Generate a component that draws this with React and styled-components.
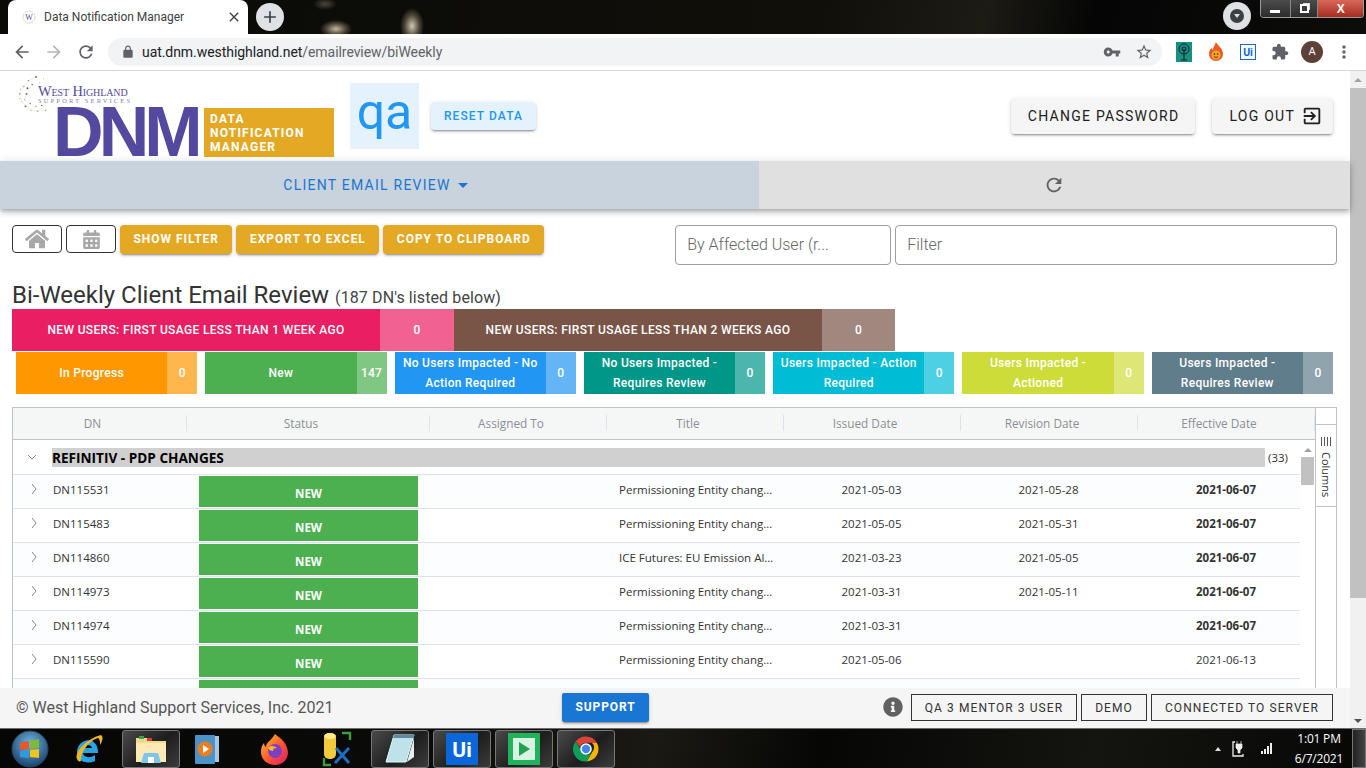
import React from 'react';
import styled, {createGlobalStyle} from 'styled-components';
import {FaHome, FaCalendarAlt, FaInfoCircle} from 'react-icons/fa';

const paths = {
  back: "M20 11H7.83l5.59-5.59L12 4l-8 8 8 8 1.41-1.41L7.83 13H20v-2z",
  forward: "M12 4l-1.41 1.41L16.17 11H4v2h12.17l-5.58 5.59L12 20l8-8z",
  reload: "M17.65 6.35C16.2 4.9 14.21 4 12 4c-4.42 0-7.99 3.58-7.99 8s3.57 8 7.99 8c3.73 0 6.84-2.55 7.73-6h-2.08c-.82 2.33-3.04 4-5.65 4-3.31 0-6-2.69-6-6s2.69-6 6-6c1.66 0 3.14.69 4.22 1.78L13 11h7V4l-2.35 2.35z",
  lock: "M18 8h-1V6c0-2.76-2.24-5-5-5S7 3.24 7 6v2H6c-1.1 0-2 .9-2 2v10c0 1.1.9 2 2 2h12c1.1 0 2-.9 2-2V10c0-1.1-.9-2-2-2zM9 6c0-1.66 1.34-3 3-3s3 1.34 3 3v2H9V6z",
  key: "M12.65 10C11.83 7.67 9.61 6 7 6c-3.31 0-6 2.69-6 6s2.69 6 6 6c2.61 0 4.83-1.67 5.65-4H17v4h4v-4h2v-4H12.65zM7 14c-1.1 0-2-.9-2-2s.9-2 2-2 2 .9 2 2-.9 2-2 2z",
  star: "M22 9.24l-7.19-.62L12 2 9.19 8.63 2 9.24l5.46 4.73L5.82 21 12 17.27 18.18 21l-1.63-7.03L22 9.24zM12 15.4l-3.76 2.27 1-4.28-3.32-2.88 4.38-.38L12 6.1l1.71 4.04 4.38.38-3.32 2.88 1 4.28L12 15.4z",
  puzzle: "M20.5 11H19V7c0-1.1-.9-2-2-2h-4V3.5C13 2.12 11.88 1 10.5 1S8 2.12 8 3.5V5H4c-1.1 0-1.99.9-1.99 2v3.8H3.5c1.49 0 2.7 1.21 2.7 2.7s-1.21 2.7-2.7 2.7H2V20c0 1.1.9 2 2 2h3.8v-1.5c0-1.49 1.21-2.7 2.7-2.7 1.49 0 2.7 1.21 2.7 2.7V22H17c1.1 0 2-.9 2-2v-4h1.5c1.38 0 2.5-1.12 2.5-2.5S21.88 11 20.5 11z",
  exit: "M10.09 15.59L11.5 17l5-5-5-5-1.41 1.41L12.67 11H3v2h9.67l-2.58 2.59zM19 3H5c-1.11 0-2 .9-2 2v4h2V5h14v14H5v-4H3v4c0 1.1.89 2 2 2h14c1.1 0 2-.9 2-2V5c0-1.1-.9-2-2-2z",
  dots: "M12 8c1.1 0 2-.9 2-2s-.9-2-2-2-2 .9-2 2 .9 2 2 2zm0 2c-1.1 0-2 .9-2 2s.9 2 2 2 2-.9 2-2-.9-2-2-2zm0 6c-1.1 0-2 .9-2 2s.9 2 2 2 2-.9 2-2-.9-2-2-2z",
  close: "M19 6.41L17.59 5 12 10.59 6.41 5 5 6.41 10.59 12 5 17.59 6.41 19 12 13.41 17.59 19 19 17.59 13.41 12z",
  plus: "M19 13h-6v6h-2v-6H5v-2h6V5h2v6h6v2z",
};

const Mi = ({name, size = 24, color = '#5f6368'}) => (
  <svg width={size} height={size} viewBox="0 0 24 24" fill={color} style={{display: 'block', flex: 'none'}}>
    <path d={paths[name]} />
  </svg>
);

const GlobalStyle = createGlobalStyle`
  html, body { margin: 0; padding: 0; height: 100%; overflow: hidden; background: #fff; }
  * { box-sizing: border-box; }
  body { font-family: Roboto, "Liberation Sans", sans-serif; }
`;

const Screen = styled.div`
  width: 100vw;
  height: 100vh;
  display: flex;
  flex-direction: column;
  overflow: hidden;
`;

/* browser chrome */
const TabStrip = styled.div`
  height: 34px;
  flex: none;
  display: flex;
  align-items: flex-end;
  background:
    radial-gradient(ellipse 16px 9px at 336px 29px, #c2b9a2 0%, rgba(120,110,90,.6) 60%, transparent 100%),
    radial-gradient(ellipse 12px 18px at 412px 26px, #cfc7b0 0%, rgba(120,110,90,.6) 60%, transparent 100%),
    radial-gradient(ellipse 12px 6px at 325px 4px, #4a473c 0%, transparent 100%),
    linear-gradient(100deg, #0a0a06 0%, #100f0a 60%, #1c1b14 72%, #050505 80%, #0c0c0a 100%);
`;
const Tab = styled.div`
  width: 240px;
  height: 34px;
  margin-left: 8px;
  background: #fff;
  border-radius: 8px 8px 0 0;
  display: flex;
  align-items: center;
  padding: 0 6px 0 13px;
  font: 12px Roboto, sans-serif;
  color: #3c4043;
`;
const TabTitle = styled.span`
  margin-left: 7px;
  flex: 1;
`;
const NewTab = styled.div`
  width: 28px;
  height: 28px;
  margin: 0 0 3px 8px;
  border-radius: 50%;
  background: #dee1e6;
  display: flex;
  align-items: center;
  justify-content: center;
`;
const MediaDot = styled.div`
  width: 28px;
  height: 28px;
  margin: 0 9px 4px auto;
  border-radius: 50%;
  background: #dee1e6;
  display: flex;
  align-items: center;
  justify-content: center;
`;
const MediaInner = styled.div`
  width: 14px;
  height: 14px;
  border-radius: 50%;
  background: #3c4043;
  display: flex;
  align-items: center;
  justify-content: center;
  &::after {
    content: '';
    border-left: 3px solid transparent;
    border-right: 3px solid transparent;
    border-top: 4px solid #dee1e6;
  }
`;
const WindowControls = styled.div`
  align-self: flex-start;
  display: flex;
  width: 104px;
  height: 18px;
  margin-right: 2px;
  border: 1px solid #9a9a9a;
  border-top: none;
  border-radius: 0 0 4px 4px;
  overflow: hidden;
`;
const WinBtn = styled.div`
  flex: ${p => p.$grow || 1};
  background: ${p => p.$bg || 'linear-gradient(#4c4c4c, #2c2c2c)'};
  border-right: 1px solid #888;
  display: flex;
  align-items: center;
  justify-content: center;
  color: #fff;
  font: bold 12px "Liberation Sans", sans-serif;
  &:last-child { border-right: none; }
`;
const MinBar = styled.div`
  width: 10px;
  height: 3px;
  background: #fff;
  margin-top: 5px;
`;
const RestoreBox = styled.div`
  width: 9px;
  height: 9px;
  border: 2px solid #fff;
  box-shadow: 2px -2px 0 -1px #ddd;
`;

const Toolbar = styled.div`
  height: 37px;
  flex: none;
  display: flex;
  align-items: center;
  background: #fff;
  border-bottom: 1px solid #d5d7da;
  padding-bottom: 1px;
`;
const NavIcon = styled.div`
  width: 32px;
  display: flex;
  justify-content: center;
  &:first-child { margin-left: 6px; }
`;
const UrlBar = styled.div`
  width: 1054px;
  height: 28px;
  margin-left: 6px;
  border-radius: 14px;
  background: #f1f3f4;
  display: flex;
  align-items: center;
  padding: 0 2px 0 13px;
  font: 14px Roboto, sans-serif;
  color: #5f6368;
`;
const UrlText = styled.span`
  flex: 1;
  margin-left: 7px;
  letter-spacing: -.06px;
  b { font-weight: 400; color: #202124; }
`;
const UrlIcon = styled.div`
  width: 32px;
  display: flex;
  justify-content: center;
`;
const Extensions = styled.div`
  display: flex;
  align-items: center;
  margin-left: 6px;
`;
const ExtSlot = styled.div`
  width: 32px;
  display: flex;
  justify-content: center;
  align-items: center;
`;
const Avatar = styled.div`
  width: 22px;
  height: 22px;
  border-radius: 50%;
  background: #5d4037;
  color: #fff;
  font: 11px Roboto, sans-serif;
  display: flex;
  align-items: center;
  justify-content: center;
`;

/* page */
const Viewport = styled.div`
  flex: 1;
  min-height: 0;
  display: flex;
`;
const Page = styled.div`
  flex: 1;
  min-width: 0;
  display: flex;
  flex-direction: column;
`;
const PageScroll = styled.div`
  width: 16px;
  flex: none;
  background: #f1f1f1;
  display: flex;
  flex-direction: column;
  align-items: center;
  padding-top: 7px;
`;
const ArrowUp = styled.div`
  border-left: 4px solid transparent;
  border-right: 4px solid transparent;
  border-bottom: 4px solid ${p => p.$color || '#a3a3a3'};
`;
const ArrowDown = styled.div`
  margin-top: auto;
  margin-bottom: 5px;
  border-left: 4px solid transparent;
  border-right: 4px solid transparent;
  border-top: 4px solid #505050;
`;
const PageThumb = styled.div`
  width: 100%;
  height: 510px;
  margin-top: 6px;
  background: #c1c1c1;
`;

const Header = styled.header`
  height: 90px;
  flex: none;
  position: relative;
  display: flex;
  align-items: flex-start;
  background: #fff;
`;
const Logo = styled.div`
  width: 334px;
  padding: 14px 0 0 38px;
  position: relative;
  flex: none;
`;
const Globe = styled.svg`
  position: absolute;
  left: 17px;
  top: 4px;
`;
const LogoName = styled.div`
  font: 14.4px "Liberation Serif", serif;
  font-variant: small-caps;
  color: #574a9c;
  line-height: 12px;
  letter-spacing: -.1px;
  span { display: block; font: 6.5px "Liberation Serif", serif; letter-spacing: 2.15px; color: #8580b0; line-height: 8px; }
`;
const LogoMark = styled.div`
  display: flex;
  margin: 3px 0 0 19px;
  height: 49px;
`;
const Dnm = styled.div`
  width: 146px;
  margin-left: -4px;
  font: bold 70px/49px "Liberation Sans", sans-serif;
  letter-spacing: -4.9px;
  color: #534aa0;
  height: 49px;
`;
const LogoBadge = styled.div`
  width: 130px;
  margin-left: 5px;
  background: #e4a924;
  color: #fff;
  font: 700 12px/14.2px Roboto, sans-serif;
  letter-spacing: 1.2px;
  padding: 4px 0 0 6px;
`;
const EnvBadge = styled.div`
  width: 69px;
  height: 66px;
  margin: 12px 0 0 16px;
  background: #e3f2fd;
  color: #2196f3;
  font: 400 50px/58px Roboto, sans-serif;
  text-align: center;
`;
const raised = `box-shadow: 0 3px 1px -2px rgba(0,0,0,.2), 0 2px 2px 0 rgba(0,0,0,.14), 0 1px 5px 0 rgba(0,0,0,.12);`;
const ResetButton = styled.div`
  width: 105px;
  height: 28px;
  margin: 31px 0 0 12px;
  border-radius: 4px;
  background: #e3f2fd;
  color: #2196f3;
  font: 500 12px/28px Roboto, sans-serif;
  letter-spacing: 1.1px;
  text-align: center;
  ${raised}
`;
const AccountGroup = styled.div`
  margin: 27px 17px 0 auto;
  display: flex;
  gap: 17px;
`;
const AccountButton = styled.div`
  height: 36px;
  padding: 0 ${p => p.$right || 16}px 0 17px;
  border-radius: 4px;
  background: #f5f5f5;
  color: #212121;
  font: 400 14px Roboto, sans-serif;
  letter-spacing: 1.25px;
  display: flex;
  align-items: center;
  gap: 6px;
  ${raised}
`;

const NavBar = styled.nav`
  height: 48px;
  flex: none;
  display: flex;
  position: relative;
  box-shadow: 0 2px 4px -1px rgba(0,0,0,.2), 0 4px 5px 0 rgba(0,0,0,.14), 0 1px 10px 0 rgba(0,0,0,.12);
`;
const NavTab = styled.div`
  width: 759px;
  background: #c8d3de;
  display: flex;
  align-items: center;
  justify-content: center;
  padding-right: 8px;
  color: #1976d2;
  font: 400 14px Roboto, sans-serif;
  letter-spacing: 1.25px;
  gap: 7px;
  &::after {
    content: '';
    border-left: 5px solid transparent;
    border-right: 5px solid transparent;
    border-top: 5px solid #1976d2;
  }
`;
const NavRefresh = styled.div`
  flex: 1;
  background: #e0e0e0;
  display: flex;
  align-items: center;
  justify-content: center;
  padding-right: 1px;
`;

const ActionRow = styled.div`
  height: 40px;
  flex: none;
  margin: 16px 13px 0 12px;
  display: flex;
  align-items: flex-start;
  gap: 4px;
`;
const IconButton = styled.div`
  width: 50px;
  height: 28px;
  border: 1px solid #333;
  border-radius: 4px;
  color: #a8a8a8;
  display: flex;
  align-items: center;
  justify-content: center;
`;
const GoldButton = styled.div`
  height: 29px;
  padding: 0 13.5px;
  border-radius: 4px;
  background: #e4a924;
  color: #fff;
  font: 700 12px/28px Roboto, sans-serif;
  letter-spacing: .97px;
  white-space: nowrap;
  ${raised}
`;
const Field = styled.div`
  width: ${p => p.$width ? p.$width + 'px' : 'auto'};
  flex: ${p => p.$width ? 'none' : 1};
  margin-left: ${p => p.$offset || 0}px;
  height: 40px;
  border: 1px solid #9e9e9e;
  border-radius: 4px;
  padding: 0 11px;
  font: 300 16px/38px Roboto, sans-serif;
  color: #666;
  white-space: nowrap;
`;

const TitleLine = styled.div`
  flex: none;
  height: 28px;
  margin: 15px 0 0 12px;
  font: 400 24px/30px Roboto, sans-serif;
  color: #333;
  white-space: nowrap;
  small { font-size: 16px; color: #444; letter-spacing: .1px; }
`;

const BannerRow = styled.div`
  flex: none;
  display: flex;
  height: 42px;
  margin: 1px 0 0 12px;
`;
const BannerLabel = styled.div`
  width: 368px;
  background: ${p => p.$bg};
  color: #fff;
  font: 500 12px Roboto, sans-serif;
  letter-spacing: .35px;
  display: flex;
  align-items: center;
  justify-content: center;
`;
const BannerCount = styled.div`
  width: ${p => p.$w}px;
  background: ${p => p.$bg};
  color: #fff;
  font: 500 12px Roboto, sans-serif;
  display: flex;
  align-items: center;
  justify-content: center;
`;

const TileRow = styled.div`
  flex: none;
  height: 42px;
  margin: 1px 17px 0 16px;
  display: grid;
  grid-template-columns: repeat(7, 1fr);
  column-gap: 8px;
`;
const Tile = styled.div`
  display: flex;
  background: ${p => p.$bg};
  color: #fff;
  font: 500 12px/20px Roboto, sans-serif;
  letter-spacing: .3px;
  text-align: center;
`;
const TileLabel = styled.div`
  flex: 1;
  padding: 0 6px;
  display: flex;
  align-items: center;
  justify-content: center;
`;
const TileCount = styled.div`
  width: 30px;
  flex: none;
  background: ${p => p.$bg};
  display: flex;
  align-items: center;
  justify-content: center;
`;

/* grid */
const Grid = styled.div`
  flex: 1;
  min-height: 0;
  margin: 13px 13px 0 12px;
  border: 1px solid #bdc3c7;
  border-bottom: none;
  display: flex;
  overflow: hidden;
  font-family: "Open Sans", "Liberation Sans", sans-serif;
`;
const GridMain = styled.div`
  flex: 1;
  min-width: 0;
  display: flex;
  flex-direction: column;
`;
const HeadRow = styled.div`
  height: 32px;
  flex: none;
  display: grid;
  grid-template-columns: 174px 243px 177px 177px 177px 177px 1fr;
  align-items: center;
  padding-bottom: 2px;
  background: #f5f7f7;
  border-bottom: 1px solid #bdc3c7;
`;
const HeadCell = styled.div`
  height: 16px;
  border-right: 1px solid #dde2eb;
  padding-right: 14px;
  text-align: center;
  font-size: 11.8px;
  line-height: 16px;
  color: #8a8f94;
`;
const GridBody = styled.div`
  flex: 1;
  min-height: 0;
  display: flex;
`;
const RowsPane = styled.div`
  flex: 1;
  min-width: 0;
  overflow: hidden;
`;
const GroupRow = styled.div`
  height: 35px;
  display: flex;
  align-items: center;
  border-bottom: 1px solid #dde2eb;
  padding: 0 12px 0 14px;
  font-size: 11.5px;
  color: #333;
`;
const Chevron = styled.svg`
  flex: none;
  display: block;
`;
const GroupBar = styled.div`
  flex: 1;
  height: 19px;
  margin-left: 15px;
  background: #d0d0d0;
  color: #000;
  font-weight: 700;
  font-size: 13.6px;
  line-height: 19px;
`;
const GroupCount = styled.div`
  margin-left: 2px;
  width: 21px;
  text-align: right;
`;
const Row = styled.div`
  height: 34px;
  width: 1302px;
  display: grid;
  grid-template-columns: 173px 243px 177px 177px 177px 177px 178px;
  background: ${p => p.$odd ? '#fcfdfe' : '#fff'};
  border-bottom: 1px solid #dde2eb;
  font-size: 11.5px;
  color: #333;
`;
const DnCell = styled.div`
  display: flex;
  align-items: center;
  height: 28px;
  padding-left: 16px;
  gap: 14px;
`;
const StatusCell = styled.div`
  height: 31px;
  margin: 1px 11px 0 13px;
  background: ${p => p.$bg || 'transparent'};
  color: #fff;
  font-weight: 700;
  font-size: 11.5px;
  line-height: 35px;
  text-align: center;
`;
const TextCell = styled.div`
  padding: 0 9px 0 13px;
  line-height: 30px;
  white-space: nowrap;
  overflow: hidden;
  text-overflow: ellipsis;
`;
const DateCell = styled.div`
  line-height: 30px;
  text-align: center;
  font-weight: ${p => p.$bold ? 700 : 400};
`;
const BodyScroll = styled.div`
  width: 15px;
  flex: none;
  display: flex;
  flex-direction: column;
  align-items: center;
  padding-top: 8px;
  background: #fff;
`;
const BodyThumb = styled.div`
  width: 13px;
  height: 28px;
  margin-top: 5px;
  background: #c1c1c1;
`;
const SidePanel = styled.div`
  width: 21px;
  flex: none;
  border-left: 1px solid #bdc3c7;
  padding-top: 16px;
`;
const ColumnsTab = styled.div`
  height: 83px;
  border-top: 1px solid #bdc3c7;
  border-bottom: 1px solid #bdc3c7;
  display: flex;
  flex-direction: column;
  align-items: center;
  padding-top: 12px;
  gap: 6px;
  font-size: 11px;
  color: #333;
`;
const ColumnsGlyph = styled.div`
  width: 10px;
  height: 9px;
  background: repeating-linear-gradient(90deg, #555 0 1px, transparent 1px 3px);
`;
const ColumnsLabel = styled.span`
  writing-mode: vertical-rl;
`;

const Footer = styled.footer`
  height: 40px;
  flex: none;
  background: #f5f5f5;
  display: flex;
  align-items: center;
  padding: 0 17px 2px 16px;
  position: relative;
  z-index: 2;
`;
const Copyright = styled.div`
  width: 546px;
  font: 400 16px Roboto, sans-serif;
  color: #555;
`;
const SupportButton = styled.div`
  width: 87px;
  height: 29px;
  border-radius: 2px;
  background: #1976d2;
  color: #fff;
  font: 700 12px/28px Roboto, sans-serif;
  letter-spacing: .9px;
  text-align: center;
  ${raised}
`;
const FooterRight = styled.div`
  margin-left: auto;
  display: flex;
  align-items: center;
  gap: 4px;
`;
const InfoWrap = styled.div`
  margin-right: 4px;
  color: #616161;
  display: flex;
`;
const OutlineTag = styled.div`
  height: 27px;
  padding: 0 13px;
  border: 1px solid #333;
  color: #333;
  font: 400 12px/26px Roboto, sans-serif;
  letter-spacing: 1.08px;
`;

/* taskbar */
const Taskbar = styled.div`
  height: 40px;
  flex: none;
  display: flex;
  align-items: center;
  border-top: 1px solid #6d6d6d;
  background: linear-gradient(100deg, #060604 0%, #0a0a08 30%, #1a1913 48%, #060605 60%, #141410 80%, #070706 100%);
  color: #fff;
  padding-left: 7px;
`;
const Slot = styled.div`
  width: ${p => p.$w || 58}px;
  height: 38px;
  margin-right: ${p => p.$gap ?? 4}px;
  display: flex;
  align-items: center;
  justify-content: center;
  flex: none;
  border-radius: 3px;
  border: 1px solid ${p => p.$active ? '#777' : 'transparent'};
  background: ${p => p.$active ? 'linear-gradient(135deg, #4a4a4a, #1d1d1d 55%, #3c3c3c)' : 'transparent'};
`;
const Tray = styled.div`
  margin-left: auto;
  display: flex;
  align-items: center;
`;
const TrayArrow = styled.div`
  border-left: 3px solid transparent;
  border-right: 3px solid transparent;
  border-bottom: 4px solid #ddd;
  margin-right: 11px;
`;
const Signal = styled.div`
  display: flex;
  align-items: flex-end;
  gap: 1px;
  height: 11px;
  margin-left: 15px;
`;
const SignalBar = styled.div`
  width: 2px;
  height: ${p => p.$h}px;
  background: #eee;
`;
const Clock = styled.div`
  width: 62px;
  margin-left: 16px;
  text-align: center;
  font: 12px/20px "Open Sans", sans-serif;
  letter-spacing: -.2px;
`;
const ShowDesktop = styled.div`
  width: 14px;
  height: 39px;
  margin-left: 2px;
  border: 1px solid #777;
  background: linear-gradient(90deg, #222, #444);
`;

const Orb = () => (
  <svg width="38" height="38" viewBox="0 0 38 38">
    <defs>
      <radialGradient id="orb" cx=".5" cy=".35" r=".7"><stop offset="0" stopColor="#6fb6de" /><stop offset="1" stopColor="#123a66" /></radialGradient>
    </defs>
    <circle cx="19" cy="19" r="18" fill="url(#orb)" stroke="#2a4560" />
    <path d="M9 13l9-2v8l-9 1z" fill="#e8562a" />
    <path d="M19 11l9-2v9l-9 1z" fill="#7ebb3c" />
    <path d="M9 21l9-1v8l-9-1z" fill="#2e9be0" />
    <path d="M19 20l9-1v9l-9-1z" fill="#f3c21e" />
  </svg>
);
const IeIcon = () => (
  <svg width="34" height="34" viewBox="0 0 34 34">
    <path d="M26 21h-15c.5 4 6 6 12 2v6c-9 4-18 0-18-9 0-8 8-14 15-11 4 2 6 6 6 12zm-6-5c-.5-4-8-4-9 0z" fill="#2aa3e6" />
    <path d="M5 27C2 20 16 6 29 3c3 2 1 7-1 10 0-3 0-6-2-7C18 8 8 20 9 29c-2 1-3 0-4-2z" fill="#f0b71e" />
  </svg>
);
const FolderIcon = () => (
  <svg width="34" height="32" viewBox="0 0 34 32">
    <path d="M2 5h11l2 3h17v21H2z" fill="#f2d98b" />
    <path d="M2 10h30v19H2z" fill="#fbeab5" />
    <rect x="5" y="3" width="5" height="3" fill="#3aa04a" /><rect x="13" y="5" width="5" height="3" fill="#d8402e" />
    <path d="M10 20h14l3 10H7z" fill="#7fc4ea" />
    <rect x="14" y="24" width="6" height="6" fill="#fff" />
  </svg>
);
const MediaIcon = () => (
  <svg width="28" height="32" viewBox="0 0 28 32">
    <rect x="8" y="3" width="18" height="26" fill="#a9c7de" />
    <rect x="2" y="2" width="20" height="29" rx="1" fill="#4c93c6" />
    <circle cx="12" cy="16" r="7.5" fill="#ee7d1f" />
    <path d="M10 12l6 4-6 4z" fill="#fff" />
  </svg>
);
const FoxIcon = () => (
  <svg width="32" height="36" viewBox="0 0 32 36">
    <defs>
      <linearGradient id="fox" x1="0" y1="0" x2="1" y2="1"><stop offset="0" stopColor="#ffca2c" /><stop offset=".5" stopColor="#ff5b2d" /><stop offset="1" stopColor="#e3176b" /></linearGradient>
    </defs>
    <path d="M16 3c3 3 12 7 13 18 0 8-6 13-13 13S2 29 2 21c0-4 1-7 3-9 0 2 1 3 2 4 0-5 6-7 9-13z" fill="url(#fox)" />
    <circle cx="16" cy="20" r="7" fill="#7b3fc4" />
    <path d="M9 17c3-3 7-2 9 0-3 0-4 1-4 3-2 0-4-1-5-3z" fill="#ffb52c" />
  </svg>
);
const DbIcon = () => (
  <svg width="34" height="36" viewBox="0 0 34 36">
    <rect x="3" y="2" width="12" height="26" rx="5" fill="#f2cb3c" />
    <ellipse cx="9" cy="5" rx="6" ry="3" fill="#ffe88a" />
    <path d="M21 2h8v7M3 27v7h7" fill="none" stroke="#3f9b3f" strokeWidth="2.4" />
    <path d="M14 32l14-15M28 32L15 17" stroke="#1a6fc4" strokeWidth="3" />
  </svg>
);
const NoteIcon = () => (
  <svg width="34" height="34" viewBox="0 0 34 34">
    <path d="M11 3h20l-8 27H3z" fill="#bfe2ea" stroke="#dff" />
    <path d="M11 3h20v3H10z" fill="#5d8aa0" />
    <path d="M24 30l7-24v19z" fill="#e5edef" />
  </svg>
);
const UiIcon = ({size = 32, outline}) => (
  <svg width={size} height={size} viewBox="0 0 32 32">
    <rect width="32" height="32" fill={outline ? '#fff' : '#0a66d9'} stroke="#0a66d9" strokeWidth={outline ? 4 : 0} />
    <text x="16" y="24" textAnchor="middle" fontFamily="Roboto, sans-serif" fontWeight="700" fontSize="21" fill={outline ? '#0a66d9' : '#fff'}>Ui</text>
  </svg>
);
const PlayIcon = () => (
  <svg width="32" height="32" viewBox="0 0 32 32">
    <rect width="32" height="32" fill="#21b35a" />
    <rect x="5" y="5" width="22" height="22" fill="#d9f3e2" />
    <path d="M11 9l11 7-11 7z" fill="#21a152" />
  </svg>
);
const ChromeIcon = () => (
  <svg width="30" height="30" viewBox="0 0 48 48">
    <path d="M24 4a20 20 0 0 1 17.3 10H24a10 10 0 0 0-9.4 6.6L7.7 11.5A20 20 0 0 1 24 4z" fill="#db4437" />
    <path d="M41.3 14A20 20 0 0 1 25 44l8.7-15a10 10 0 0 0-.2-15z" fill="#f4b400" />
    <path d="M25 44A20 20 0 0 1 7.7 11.5l8.6 15A10 10 0 0 0 33.7 29z" fill="#0f9d58" />
    <circle cx="24" cy="24" r="8" fill="#4285f4" stroke="#fff" strokeWidth="2.5" />
  </svg>
);
const GlobeMark = ({size}) => {
  const dots = [[20, 2], [28, 4], [12, 6], [7, 12], [3, 20], [5, 28], [9, 33], [15, 37], [22, 38], [30, 37], [16, 10], [24, 8], [10, 20], [8, 26], [14, 30], [20, 33], [26, 32], [4, 15], [11, 14], [3, 25]];
  return (
    <Globe width={size} height={size} viewBox="0 0 40 40">
      {dots.map(([x, y], i) => <circle key={i} cx={x} cy={y} r={i % 3 === 0 ? 1 : .7} fill={i % 2 ? '#c9b67a' : '#574a7c'} />)}
      <path d="M20 2L12 6 7 12 3 20 5 28 9 33 15 37 22 38M16 10L10 20 8 26 14 30 20 33" fill="none" stroke="#d8cfae" strokeWidth=".4" />
    </Globe>
  );
};
const FireExt = () => (
  <svg width="16" height="20" viewBox="0 0 16 20">
    <path d="M8 0c1 3 7 6 7 12a7 7 0 0 1-14 0c0-3 1-5 3-6 0 1 1 2 1 2 0-3 2-5 3-8z" fill="#ef5a24" />
    <circle cx="8" cy="13" r="4.5" fill="#f7a325" />
    <circle cx="6.4" cy="12" r=".8" fill="#222" /><circle cx="9.6" cy="12" r=".8" fill="#222" />
    <path d="M6 14.5c1 1.2 3 1.2 4 0" fill="none" stroke="#222" strokeWidth=".8" />
  </svg>
);
const TreeExt = () => (
  <svg width="16" height="20" viewBox="0 0 16 20">
    <rect width="16" height="20" fill="#17917f" />
    <circle cx="8" cy="7" r="5" fill="none" stroke="#123" strokeWidth="1" />
    <circle cx="8" cy="7" r="2" fill="none" stroke="#123" strokeWidth="1" />
    <path d="M8 7v11M5 18h6" stroke="#123" strokeWidth="1.2" />
  </svg>
);
const PlugIcon = () => (
  <svg width="14" height="18" viewBox="0 0 14 18">
    <path d="M3 2H1v14h10v-2" fill="none" stroke="#eee" strokeWidth="1.3" />
    <path d="M5 1v3M9 1v3M4 4h6v4l-2 2v3H6v-3L4 8z" fill="#eee" stroke="#eee" strokeWidth=".7" />
  </svg>
);

const tiles = [
  {label: 'In Progress', count: 0, bg: '#ff9800', light: '#ffb74d'},
  {label: 'New', count: 147, bg: '#4caf50', light: '#81c784'},
  {label: 'No Users Impacted - No Action Required', count: 0, bg: '#2196f3', light: '#64b5f6'},
  {label: 'No Users Impacted - Requires Review', count: 0, bg: '#009688', light: '#4db6ac'},
  {label: 'Users Impacted - Action Required', count: 0, bg: '#00bcd4', light: '#4dd0e1'},
  {label: 'Users Impacted - Actioned', count: 0, bg: '#cddc39', light: '#dce775'},
  {label: 'Users Impacted - Requires Review', count: 0, bg: '#607d8b', light: '#90a4ae'},
];

const heads = ['DN', 'Status', 'Assigned To', 'Title', 'Issued Date', 'Revision Date', 'Effective Date'];

const permissioning = 'Permissioning Entity changes for the period';
const rows = [
  {dn: 'DN115531', title: permissioning, issued: '2021-05-03', revision: '2021-05-28', effective: '2021-06-07', bold: true},
  {dn: 'DN115483', title: permissioning, issued: '2021-05-05', revision: '2021-05-31', effective: '2021-06-07', bold: true},
  {dn: 'DN114860', title: 'ICE Futures: EU Emission Allowances changes', issued: '2021-03-23', revision: '2021-05-05', effective: '2021-06-07', bold: true},
  {dn: 'DN114973', title: permissioning, issued: '2021-03-31', revision: '2021-05-11', effective: '2021-06-07', bold: true},
  {dn: 'DN114974', title: permissioning, issued: '2021-03-31', revision: '', effective: '2021-06-07', bold: true},
  {dn: 'DN115590', title: permissioning, issued: '2021-05-06', revision: '', effective: '2021-06-13'},
  {dn: '', title: '', issued: '', revision: '', effective: ''},
];

export default function App() {
  return (
    <Screen>
      <GlobalStyle />
      <TabStrip>
        <Tab>
          <svg width="16" height="16" viewBox="0 0 16 16" style={{flex: 'none'}}>
            <circle cx="8" cy="8" r="6" fill="none" stroke="#cfc3a0" strokeDasharray="1.5 1" />
            <text x="8" y="11" textAnchor="middle" fontFamily="Liberation Serif, serif" fontSize="8" fill="#574a9c">W</text>
          </svg>
          <TabTitle>Data Notification Manager</TabTitle>
          <Mi name="close" size={16} color="#3c4043" />
        </Tab>
        <NewTab><Mi name="plus" size={20} color="#3c4043" /></NewTab>
        <MediaDot><MediaInner /></MediaDot>
        <WindowControls>
          <WinBtn $grow={1.1}><MinBar /></WinBtn>
          <WinBtn $grow={1}><RestoreBox /></WinBtn>
          <WinBtn $grow={1.7} $bg="linear-gradient(#d9685a, #a62c1e)">X</WinBtn>
        </WindowControls>
      </TabStrip>

      <Toolbar>
        <NavIcon><Mi name="back" size={20} /></NavIcon>
        <NavIcon><Mi name="forward" size={20} color="#b4b6b9" /></NavIcon>
        <NavIcon><Mi name="reload" size={20} /></NavIcon>
        <UrlBar>
          <Mi name="lock" size={14} />
          <UrlText><b>uat.dnm.westhighland.net</b>/emailreview/biWeekly</UrlText>
          <UrlIcon><Mi name="key" size={18} /></UrlIcon>
          <UrlIcon><Mi name="star" size={18} /></UrlIcon>
        </UrlBar>
        <Extensions>
          <ExtSlot><TreeExt /></ExtSlot>
          <ExtSlot><FireExt /></ExtSlot>
          <ExtSlot><UiIcon size={16} outline /></ExtSlot>
          <ExtSlot><Mi name="puzzle" size={18} /></ExtSlot>
          <ExtSlot><Avatar>A</Avatar></ExtSlot>
          <ExtSlot><Mi name="dots" size={20} /></ExtSlot>
        </Extensions>
      </Toolbar>

      <Viewport>
        <Page>
          <Header>
            <Logo>
              <GlobeMark size={38} />
              <LogoName>West Highland<span>SUPPORT SERVICES</span></LogoName>
              <LogoMark>
                <Dnm>DNM</Dnm>
                <LogoBadge>DATA<br />NOTIFICATION<br />MANAGER</LogoBadge>
              </LogoMark>
            </Logo>
            <EnvBadge>qa</EnvBadge>
            <ResetButton>RESET DATA</ResetButton>
            <AccountGroup>
              <AccountButton>CHANGE PASSWORD</AccountButton>
              <AccountButton $right={10}>LOG OUT <Mi name="exit" size={22} color="#212121" /></AccountButton>
            </AccountGroup>
          </Header>

          <NavBar>
            <NavTab>CLIENT EMAIL REVIEW</NavTab>
            <NavRefresh><Mi name="reload" size={22} color="#616161" /></NavRefresh>
          </NavBar>

          <ActionRow>
            <IconButton><FaHome size={24} /></IconButton>
            <IconButton><FaCalendarAlt size={19} /></IconButton>
            <GoldButton>SHOW FILTER</GoldButton>
            <GoldButton>EXPORT TO EXCEL</GoldButton>
            <GoldButton>COPY TO CLIPBOARD</GoldButton>
            <Field $width={216} $offset={127}>By Affected User (r...</Field>
            <Field>Filter</Field>
          </ActionRow>

          <TitleLine>Bi-Weekly Client Email Review <small>(187 DN's listed below)</small></TitleLine>

          <BannerRow>
            <BannerLabel $bg="#e91e63">NEW USERS: FIRST USAGE LESS THAN 1 WEEK AGO</BannerLabel>
            <BannerCount $w={74} $bg="#f06292">0</BannerCount>
            <BannerLabel $bg="#795548">NEW USERS: FIRST USAGE LESS THAN 2 WEEKS AGO</BannerLabel>
            <BannerCount $w={73} $bg="#a1887f">0</BannerCount>
          </BannerRow>

          <TileRow>
            {tiles.map(t => (
              <Tile key={t.label} $bg={t.bg}>
                <TileLabel>{t.label}</TileLabel>
                <TileCount $bg={t.light}>{t.count}</TileCount>
              </Tile>
            ))}
          </TileRow>

          <Grid>
            <GridMain>
              <HeadRow>
                {heads.map(h => <HeadCell key={h}>{h}</HeadCell>)}
              </HeadRow>
              <GridBody>
                <RowsPane>
                  <GroupRow>
                    <Chevron width="10" height="10" viewBox="0 0 10 10"><path d="M1 3l4 4 4-4" fill="none" stroke="#888" /></Chevron>
                    <GroupBar>REFINITIV - PDP CHANGES</GroupBar>
                    <GroupCount>(33)</GroupCount>
                  </GroupRow>
                  {rows.map((r, i) => (
                    <Row key={i} $odd={i % 2 === 0}>
                      <DnCell>
                        {r.dn && <Chevron width="10" height="12" viewBox="0 0 10 12"><path d="M3 1l4 5-4 5" fill="none" stroke="#888" /></Chevron>}
                        {r.dn}
                      </DnCell>
                      <StatusCell $bg="#4caf50">{r.dn && 'NEW'}</StatusCell>
                      <div />
                      <TextCell>{r.title}</TextCell>
                      <DateCell>{r.issued}</DateCell>
                      <DateCell>{r.revision}</DateCell>
                      <DateCell $bold={r.bold}>{r.effective}</DateCell>
                    </Row>
                  ))}
                </RowsPane>
                <BodyScroll>
                  <ArrowUp />
                  <BodyThumb />
                </BodyScroll>
              </GridBody>
            </GridMain>
            <SidePanel>
              <ColumnsTab>
                <ColumnsGlyph />
                <ColumnsLabel>Columns</ColumnsLabel>
              </ColumnsTab>
            </SidePanel>
          </Grid>

          <Footer>
            <Copyright>© West Highland Support Services, Inc. 2021</Copyright>
            <SupportButton>SUPPORT</SupportButton>
            <FooterRight>
              <InfoWrap><FaInfoCircle size={20} /></InfoWrap>
              <OutlineTag>QA 3 MENTOR 3 USER</OutlineTag>
              <OutlineTag>DEMO</OutlineTag>
              <OutlineTag>CONNECTED TO SERVER</OutlineTag>
            </FooterRight>
          </Footer>
        </Page>
        <PageScroll>
          <ArrowUp />
          <PageThumb />
          <ArrowDown />
        </PageScroll>
      </Viewport>

      <Taskbar>
        <Slot $w={46} $gap={7}><Orb /></Slot>
        <Slot $w={58} $gap={4}><IeIcon /></Slot>
        <Slot $active $gap={2}><FolderIcon /></Slot>
        <Slot $w={50} $gap={17}><MediaIcon /></Slot>
        <Slot $w={52} $gap={11}><FoxIcon /></Slot>
        <Slot $w={52} $gap={7}><DbIcon /></Slot>
        <Slot $active><NoteIcon /></Slot>
        <Slot $active><UiIcon /></Slot>
        <Slot $active><PlayIcon /></Slot>
        <Slot $active><ChromeIcon /></Slot>
        <Tray>
          <TrayArrow />
          <PlugIcon />
          <Signal>
            <SignalBar $h={3} /><SignalBar $h={5} /><SignalBar $h={8} /><SignalBar $h={11} />
          </Signal>
          <Clock>1:01 PM<br />6/7/2021</Clock>
          <ShowDesktop />
        </Tray>
      </Taskbar>
    </Screen>
  );
}
